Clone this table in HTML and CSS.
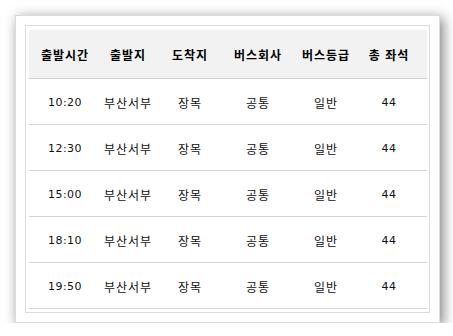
FILE: index.html
```html
<!DOCTYPE html>
<html lang="ko">
<head>
<meta charset="utf-8">
<link rel="stylesheet" href="styles.css">
</head>
<body>
<div class="panel">
  <div class="frame">
    <table class="schedule">
      <colgroup>
        <col class="c1"><col class="c2"><col class="c3"><col class="c4"><col class="c5"><col class="c6">
      </colgroup>
      <thead>
        <tr><th>출발시간</th><th>출발지</th><th>도착지</th><th>버스회사</th><th>버스등급</th><th class="last">총 좌석</th></tr>
      </thead>
      <tbody>
        <tr><td class="num">10:20</td><td>부산서부</td><td>장목</td><td>공통</td><td>일반</td><td class="num last">44</td></tr>
        <tr><td class="num">12:30</td><td>부산서부</td><td>장목</td><td>공통</td><td>일반</td><td class="num last">44</td></tr>
        <tr><td class="num">15:00</td><td>부산서부</td><td>장목</td><td>공통</td><td>일반</td><td class="num last">44</td></tr>
        <tr><td class="num">18:10</td><td>부산서부</td><td>장목</td><td>공통</td><td>일반</td><td class="num last">44</td></tr>
        <tr><td class="num">19:50</td><td>부산서부</td><td>장목</td><td>공통</td><td>일반</td><td class="num last">44</td></tr>
      </tbody>
    </table>
  </div>
</div>
</body>
</html>
```
FILE: styles.css
```css
* {
  box-sizing: border-box;
}
html, body {
  margin: 0;
  padding: 0;
  background: #ffffff;
}
body {
  padding: 15px 0 0 15px;
  font-family: "Noto Sans CJK KR", "DejaVu Sans", sans-serif;
  color: #111;
}
.panel {
  width: 425px;
  height: 308px;
  padding: 9px;
  border: 1px solid #dcdcdc;
  background: #fff;
  box-shadow: 3px 3px 12px rgba(0, 0, 0, 0.5);
}
.frame {
  width: 405px;
  height: 288px;
  padding: 4px 2px 3px 3px;
  border: 1px solid #dcdcdc;
}
.schedule {
  width: 398px;
  border-collapse: separate;
  border-spacing: 0;
  table-layout: fixed;
}
.c1 { width: 72px; }
.c2 { width: 54px; }
.c3 { width: 70px; }
.c4 { width: 66px; }
.c5 { width: 70px; }
.c6 { width: 66px; }
.schedule th {
  background: #f2f2f2;
  height: 49px;
  padding: 1px 0 0 0;
  font-size: 12px;
  line-height: 16px;
  font-weight: bold;
  letter-spacing: 1px;
  color: #000;
  text-align: center;
  border-bottom: 1px solid #cfcfcf;
  white-space: nowrap;
}
.schedule td {
  height: 46px;
  padding: 2px 0 0 0;
  font-size: 12px;
  line-height: 16px;
  letter-spacing: 1px;
  color: #111;
  text-align: center;
  border-bottom: 1px solid #d4d4d4;
  white-space: nowrap;
}
.schedule td.num {
  font-family: "DejaVu Sans", sans-serif;
  letter-spacing: 0.5px;
  font-size: 11px;
}
.schedule .last {
  padding-right: 10px;
}
```
